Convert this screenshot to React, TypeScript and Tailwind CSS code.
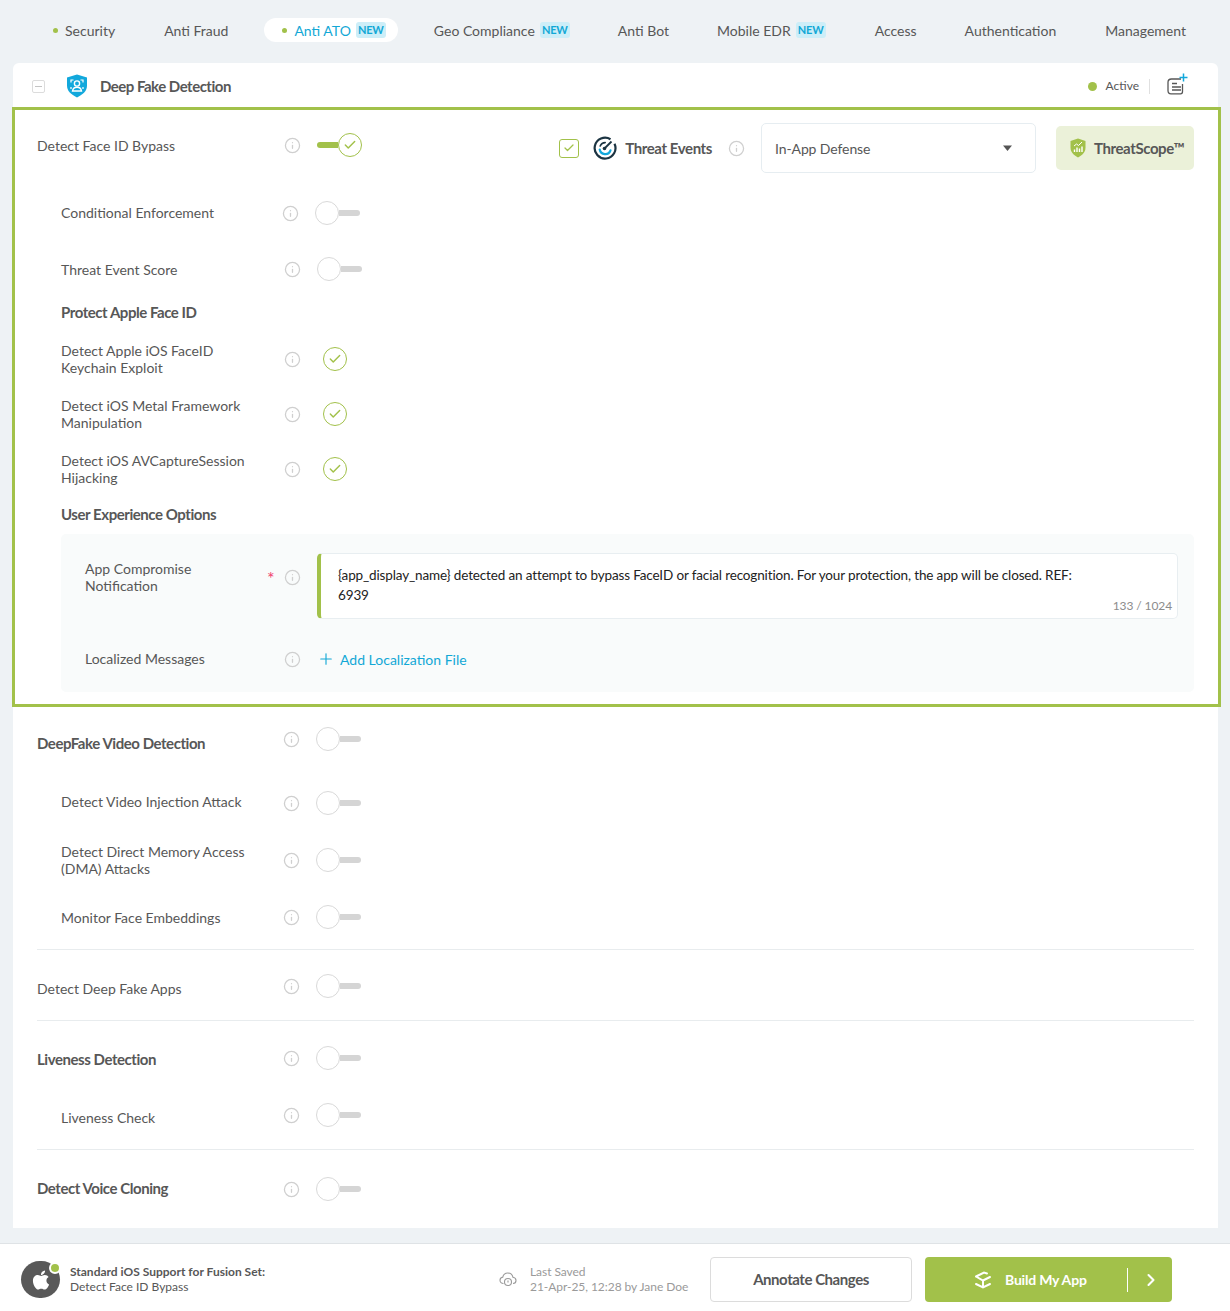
import type { ReactNode } from 'react';
import { Check, ChevronRight, Info, Plus } from 'lucide-react';
import { FaApple } from 'react-icons/fa';

function NewBadge() {
  return <span className="ml-[5px] flex h-4 w-[30px] items-center justify-center rounded-[3px] bg-[#cdeef8] text-[11px] font-bold tracking-[-0.2px] text-[#12a8d6]">NEW</span>;
}

function NavItem({ label, className, dot, badge }: { label: string; className: string; dot?: boolean; badge?: boolean }) {
  return (
    <div className={`flex items-center text-[14px] text-[#575757] ${className}`}>
      {dot && <span className="mr-[7px] h-[5px] w-[5px] rounded-full bg-[#a2c14a]" />}
      {label}
      {badge && <NewBadge />}
    </div>
  );
}

function InfoIcon() {
  return <Info size={17} strokeWidth={1.8} className="shrink-0 text-[#cfcfcf]" />;
}

function Toggle({ on }: { on?: boolean }) {
  if (on) {
    return (
      <div className="flex items-center">
        <div className="h-[6px] w-[21px] rounded-l-full bg-[#a2c14a]" />
        <div className="flex h-6 w-6 items-center justify-center rounded-full border-[1.5px] border-[#a2c14a] bg-white">
          <Check size={14} strokeWidth={2.5} className="text-[#a2c14a]" />
        </div>
      </div>
    );
  }
  return (
    <div className="flex items-center">
      <div className="h-6 w-6 rounded-full border border-[#d9d9d9] bg-white" />
      <div className="h-[6px] w-[21px] rounded-r-full bg-[#d5d5d5]" />
    </div>
  );
}

function CheckCircle() {
  return (
    <div className="ml-[22px] flex h-6 w-6 items-center justify-center rounded-full border-[1.5px] border-[#a2c14a]">
      <Check size={14} strokeWidth={2.5} className="text-[#a2c14a]" />
    </div>
  );
}

function Row({ label, bold, className, labelClass, controlClass, children }: { label: ReactNode; bold?: boolean; className: string; labelClass: string; controlClass?: string; children: ReactNode }) {
  // single line labels sit 1px high in the reference
  const lift = typeof label === 'string' ? 'mb-[2px]' : '';
  return (
    <div className={`flex h-10 items-center ${className}`}>
      <div className={`shrink-0 leading-[17px] text-[#575757] ${bold ? 'text-[15px] font-bold tracking-[-0.45px]' : 'text-[14px]'} ${lift} ${labelClass}`}>{label}</div>
      <div className={`flex items-center ${controlClass ?? ''}`}>{children}</div>
    </div>
  );
}

function Divider() {
  return <div className="ml-[24px] mr-[24px] h-px bg-[#e8ecee]" />;
}

function ShieldFace() {
  return (
    <svg width="22" height="24" viewBox="0 0 22 24" fill="none">
      <path d="M11 .5 21 3.6v8c0 5.4-4 9-10 12-6-3-10-6.600-10-12v-8z" fill="#12a8dc" />
      <circle cx="11" cy="9.500" r="2.600" stroke="#fff" strokeWidth="1.400" />
      <path d="M6.500 17c.4-2.600 2-3.800 4.500-3.800s4.100 1.200 4.500 3.800z" stroke="#fff" strokeWidth="1.400" />
      <path d="M5 8.500V6h2.500M17 8.500V6h-2.500M5 13v2M17 13v2" stroke="#fff" strokeWidth="1.200" />
    </svg>
  );
}

function ThreatIcon() {
  return (
    <svg width="24" height="24" viewBox="0 0 24 24" fill="none">
      <path d="M17.500 3.300A10.400 10.400 0 1 0 21.500 7.800" stroke="#1c3442" strokeWidth="2.200" />
      <path d="M6.700 13.500a5.600 5.600 0 0 0 10.800.8" stroke="#12a8dc" strokeWidth="2.200" strokeLinecap="round" />
      <path d="M7.200 10a5.500 5.500 0 0 1 5-3.400" stroke="#1c3442" strokeWidth="1.600" strokeLinecap="round" />
      <path d="m11.500 12.500 7-7" stroke="#1c3442" strokeWidth="1.800" />
      <circle cx="11.500" cy="12.500" r="1.800" fill="#1c3442" />
    </svg>
  );
}

function ShieldScope() {
  return (
    <svg width="16" height="20" viewBox="0 0 16 20" fill="none">
      <path d="M8 .5 15.500 3v6.500c0 4.600-3 7.700-7.500 10-4.500-2.300-7.500-5.400-7.500-10V3z" fill="#a2c14a" />
      <path d="m4 8 2.500-2L8.500 7.500 12 4" stroke="#fff" strokeWidth="1" />
      <path d="M4.500 14v-2.500M7 14V9.500M9.500 14v-3.500M12 14V8.500" stroke="#fff" strokeWidth="1.400" />
    </svg>
  );
}

function NotePlus() {
  return (
    <svg width="21" height="22" viewBox="0 0 21 22" fill="none">
      <path d="M14 6H4.500C2.300 6 1 7.200 1 9.200v8.300C1 19.500 2.200 20.800 4 20.800h9.500c1.300 0 2-.8 2-2V11" stroke="#575757" strokeWidth="1.300" />
      <path d="M5 10.500h5M5 14h9M5 17h9" stroke="#575757" strokeWidth="1.300" />
      <path d="M16.500 .5v8M12.500 4.500h8" stroke="#12a8dc" strokeWidth="1.500" />
    </svg>
  );
}

function CloudClock() {
  return (
    <svg width="18" height="17" viewBox="0 0 18 17" fill="none">
      <path d="M4.500 12.500C2.500 12.500 1 11.200 1 9.300c0-1.700 1.200-3 2.800-3.200C4.300 3.700 6.400 2 8.800 2c2.600 0 4.700 1.800 5.100 4.200 1.800.2 3.100 1.500 3.100 3.200 0 1.700-1.200 3-3 3.100" stroke="#9a9a9a" strokeWidth="1.100" />
      <circle cx="9" cy="11" r="3.500" stroke="#9a9a9a" strokeWidth="1.100" fill="#fff" />
      <path d="M9 9.500V11.500" stroke="#9a9a9a" strokeWidth="1.100" />
    </svg>
  );
}

function BuildIcon() {
  return (
    <svg width="20" height="20" viewBox="0 0 20 20" fill="none" stroke="#fff" strokeWidth="2" strokeLinecap="round">
      <path d="M3 6.500 11 2.500 14 3.500M3 6.500l7 4 7-3.500M10 10.500v7M3 14l7 3.500 7-3.500" />
    </svg>
  );
}

export default function App() {
  return (
    <div className="flex h-[1311px] w-[1230px] flex-col overflow-hidden bg-[#eef2f5] font-['Lato',sans-serif]">
      {/* Top nav */}
      <nav className="flex h-[63px] shrink-0 items-center pb-[3px]">
        <NavItem label="Security" dot className="ml-[53px]" />
        <NavItem label="Anti Fraud" className="ml-[49px]" />
        <div className="ml-[36px] flex h-6 items-center rounded-full bg-white pl-[18px] pr-[12px] text-[14px] text-[#12a8d6]">
          <span className="mr-[7px] h-[5px] w-[5px] rounded-full bg-[#a2c14a]" />
          Anti ATO
          <NewBadge />
        </div>
        <NavItem label="Geo Compliance" badge className="ml-[36px]" />
        <NavItem label="Anti Bot" className="ml-[48px]" />
        <NavItem label="Mobile EDR" badge className="ml-[48px]" />
        <NavItem label="Access" className="ml-[49px]" />
        <NavItem label="Authentication" className="ml-[48px]" />
        <NavItem label="Management" className="ml-[49px]" />
      </nav>

      {/* Card */}
      <section className="ml-[13px] w-[1205px] shrink-0 rounded-t-[6px] bg-white">
        <header className="flex h-[44px] items-center pt-[2px]">
          <div className="ml-[19px] flex h-[13px] w-[13px] items-center justify-center rounded-[2px] border border-[#dcdcdc]">
            <div className="h-px w-[7px] bg-[#c4c4c4]" />
          </div>
          <div className="ml-[21px]"><ShieldFace /></div>
          <h1 className="ml-[12px] text-[15px] font-bold tracking-[-0.5px] text-[#575757]">Deep Fake Detection</h1>
          <span className="ml-auto h-[9px] w-[9px] rounded-full bg-[#a2c14a]" />
          <span className="ml-[9px] text-[12px] text-[#575757]">Active</span>
          <span className="ml-[10px] h-[15px] w-px bg-[#e0e0e0]" />
          <div className="ml-[17px] mr-[30px] mb-[5px]"><NotePlus /></div>
        </header>

        {/* Highlighted block */}
        <div className="-ml-px -mr-[3px] border-[3px] border-[#a2c14a] bg-white pb-[12px] pl-[22px] pr-[24px]">
          <div className="mt-[13px] flex h-[50px] items-center">
            <Row label="Detect Face ID Bypass" className="mb-[4px]" labelClass="w-[247px]" controlClass="mb-[2px]">
              <InfoIcon />
              <div className="ml-[16px]"><Toggle on /></div>
            </Row>
            <div className="ml-auto flex items-center">
              <div className="flex h-[19px] w-[20px] items-center justify-center rounded-[3px] border border-[#a2c14a]">
                <Check size={12} strokeWidth={2.5} className="text-[#a2c14a]" />
              </div>
              <div className="ml-[14px]"><ThreatIcon /></div>
              <span className="ml-[8px] text-[15px] font-bold tracking-[-0.4px] text-[#575757]">Threat Events</span>
              <div className="ml-[16px]"><InfoIcon /></div>
              <div className="ml-[16px] flex h-[50px] w-[275px] items-center rounded-[5px] border border-[#e6edf1] pl-[13px] pr-[23px] text-[14px] tracking-[-0.1px] text-[#575757]">
                In-App Defense
                <svg className="ml-auto" width="9" height="6" viewBox="0 0 9 6"><path d="M0 .5h9L4.500 6z" fill="#555" /></svg>
              </div>
              <div className="ml-[20px] flex h-[44px] w-[138px] items-center rounded-[5px] bg-[#ebf1d9] pl-[14px] text-[15px] font-bold tracking-[-0.4px] text-[#575757]">
                <ShieldScope />
                <span className="ml-[8px]">ThreatScope™</span>
              </div>
            </div>
          </div>

          <div className="pl-[24px]">
            <Row label="Conditional Enforcement" className="mt-[20px]" labelClass="w-[221px]">
              <InfoIcon />
              <div className="ml-[16px]"><Toggle /></div>
            </Row>
            <Row label="Threat Event Score" className="mt-[17px]" labelClass="w-[223px]" controlClass="mb-[2px]">
              <InfoIcon />
              <div className="ml-[16px]"><Toggle /></div>
            </Row>
            <h2 className="mt-[13px] flex h-5 items-center pb-[2px] text-[15px] font-bold tracking-[-0.45px] text-[#575757]">Protect Apple Face ID</h2>
            <Row label={<>Detect Apple iOS FaceID<br />Keychain Exploit</>} className="mt-[16px]" labelClass="w-[223px]">
              <InfoIcon /><CheckCircle />
            </Row>
            <Row label={<>Detect iOS Metal Framework<br />Manipulation</>} className="mt-[15px]" labelClass="w-[223px]">
              <InfoIcon /><CheckCircle />
            </Row>
            <Row label={<>Detect iOS AVCaptureSession<br />Hijacking</>} className="mt-[15px]" labelClass="w-[223px]">
              <InfoIcon /><CheckCircle />
            </Row>
            <h2 className="mt-[16px] flex h-5 items-center pb-[2px] text-[15px] font-bold tracking-[-0.45px] text-[#575757]">User Experience Options</h2>

            <div className="mt-[9px] h-[158px] rounded-[5px] bg-[#f9fbfb] pl-[24px] pr-[16px] pt-[19px]">
              <div className="flex items-start">
                <div className="mt-[7px] w-[182px] text-[14px] leading-[17px] text-[#575757]">App Compromise<br />Notification</div>
                <span className="mt-[18px] w-[17px] text-[18px] leading-[14px] text-[#f0426e]">*</span>
                <div className="mt-[16px]"><InfoIcon /></div>
                <div className="relative ml-[16px] h-[66px] w-[861px] rounded-[5px] border border-l-[4px] border-[#e8eef1] border-l-[#a2c14a] bg-white pl-[17px] pt-[11px] text-[13.500px] leading-[20px] tracking-[-0.14px] text-[#222]">
                  {'{app_display_name} detected an attempt to bypass FaceID or facial recognition. For your protection, the app will be closed. REF:'}
                  <br />
                  6939
                  <span className="absolute bottom-[5px] right-[5px] text-[12px] leading-[14px] tracking-[-0.1px] text-[#8c8c8c]">133 / 1024</span>
                </div>
              </div>
              <div className="mt-[20px] flex h-[40px] items-center">
                <div className="mb-[2px] w-[199px] text-[14px] text-[#575757]">Localized Messages</div>
                <InfoIcon />
                <Plus size={18} strokeWidth={1.5} className="ml-[16px] text-[#12a8d6]" />
                <span className="ml-[5px] text-[14px] text-[#12a8d6]">Add Localization File</span>
              </div>
            </div>
          </div>
        </div>

        {/* Remaining rows */}
        <div className="pb-[19px]">
          <div className="pl-[24px]">
            <Row label="DeepFake Video Detection" bold className="mt-[17px]" labelClass="w-[246px]" controlClass="mb-[10px]">
              <InfoIcon /><div className="ml-[16px]"><Toggle /></div>
            </Row>
          </div>
          <div className="pl-[48px]">
            <Row label="Detect Video Injection Attack" className="mt-[18px]" labelClass="w-[222px]" controlClass="mt-[2px]">
              <InfoIcon /><div className="ml-[16px]"><Toggle /></div>
            </Row>
            <Row label={<>Detect Direct Memory Access<br />(DMA) Attacks</>} className="mt-[18px]" labelClass="w-[222px]">
              <InfoIcon /><div className="ml-[16px]"><Toggle /></div>
            </Row>
            <Row label="Monitor Face Embeddings" className="mt-[18px]" labelClass="w-[222px]" controlClass="mb-[2px]">
              <InfoIcon /><div className="ml-[16px]"><Toggle /></div>
            </Row>
          </div>
          <div className="mt-[11px]"><Divider /></div>
          <div className="pl-[24px]">
            <Row label="Detect Deep Fake Apps" className="mt-[19px]" labelClass="w-[246px]" controlClass="mb-[6px]">
              <InfoIcon /><div className="ml-[16px]"><Toggle /></div>
            </Row>
          </div>
          <div className="mt-[11px]"><Divider /></div>
          <div className="pl-[24px]">
            <Row label="Liveness Detection" bold className="mt-[19px]" labelClass="w-[246px]" controlClass="mb-[4px]">
              <InfoIcon /><div className="ml-[16px]"><Toggle /></div>
            </Row>
          </div>
          <div className="pl-[48px]">
            <Row label="Liveness Check" className="mt-[18px]" labelClass="w-[222px]" controlClass="mb-[6px]">
              <InfoIcon /><div className="ml-[16px]"><Toggle /></div>
            </Row>
          </div>
          <div className="mt-[11px]"><Divider /></div>
          <div className="pl-[24px]">
            <Row label="Detect Voice Cloning" bold className="mt-[19px]" labelClass="w-[246px]">
              <InfoIcon /><div className="ml-[16px]"><Toggle /></div>
            </Row>
          </div>
        </div>
      </section>

      {/* Footer */}
      <footer className="mt-[15px] flex flex-1 items-center border-t border-[#dfe3e6] bg-white pl-[21px] pt-[4px]">
        <div className="relative flex h-[37px] w-[39px] items-center justify-center rounded-full bg-[#595959] text-white">
          <FaApple size={22} />
          <span className="absolute right-[-1px] top-[1px] h-[12px] w-[12px] rounded-full border-2 border-white bg-[#a2c14a]" />
        </div>
        <div className="mb-[2px] ml-[10px] w-[429px] text-[12px] leading-[15px] text-[#575757]">
          <div className="font-bold">Standard iOS Support for Fusion Set:</div>
          <div>Detect Face ID Bypass</div>
        </div>
        <CloudClock />
        <div className="mb-[2px] ml-[13px] w-[180px] text-[12px] leading-[15px] tracking-[-0.05px] text-[#9a9a9a]">
          <div>Last Saved</div>
          <div>21-Apr-25, 12:28 by Jane Doe</div>
        </div>
        <button className="flex h-[45px] w-[202px] items-center justify-center rounded-[4px] border border-[#dcdcdc] text-[15px] font-bold tracking-[-0.45px] text-[#575757]">Annotate Changes</button>
        <button className="ml-[13px] flex h-[45px] w-[247px] items-center rounded-[4px] bg-[#a2c14a] pl-[48px] text-[14px] font-bold text-white">
          <BuildIcon />
          <span className="ml-[12px] w-[122px] text-left tracking-[-0.2px]">Build My App</span>
          <span className="h-6 w-px bg-white" />
          <ChevronRight size={20} strokeWidth={2.5} className="ml-[13px]" />
        </button>
      </footer>
    </div>
  );
}
